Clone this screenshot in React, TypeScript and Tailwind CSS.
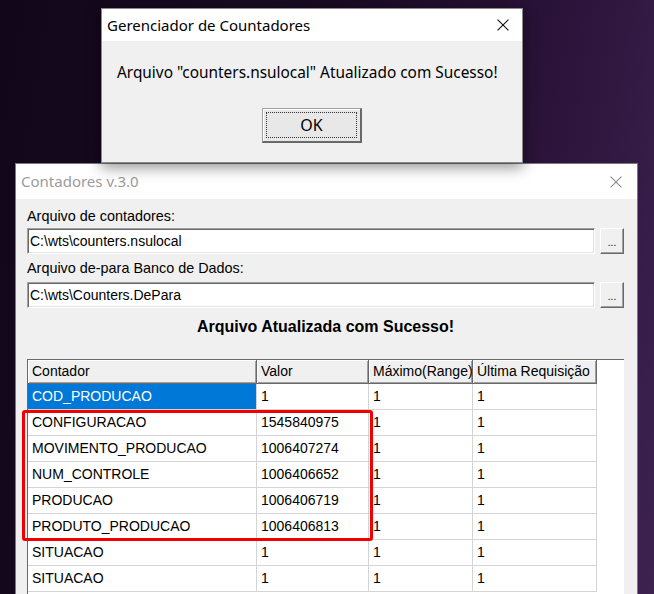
import React from "react";

const rows = [
  { name: "COD_PRODUCAO", valor: "1", max: "1", ult: "1", selected: true },
  { name: "CONFIGURACAO", valor: "1545840975", max: "1", ult: "1" },
  { name: "MOVIMENTO_PRODUCAO", valor: "1006407274", max: "1", ult: "1" },
  { name: "NUM_CONTROLE", valor: "1006406652", max: "1", ult: "1" },
  { name: "PRODUCAO", valor: "1006406719", max: "1", ult: "1" },
  { name: "PRODUTO_PRODUCAO", valor: "1006406813", max: "1", ult: "1" },
  { name: "SITUACAO", valor: "1", max: "1", ult: "1" },
  { name: "SITUACAO", valor: "1", max: "1", ult: "1" },
];

const sans = "font-['Liberation_Sans',Arial,sans-serif]";
const ui = "font-['Noto_Sans','Open_Sans',sans-serif]";

const CloseX = ({ color, size = 11 }: { color: string; size?: number }) => (
  <svg width={size} height={size} viewBox="0 0 11 11" fill="none">
    <path d="M0.5 0.5L10.5 10.5M10.5 0.5L0.5 10.5" stroke={color} strokeWidth="1" />
  </svg>
);

const PathField = ({ value }: { value: string }) => (
  <div className="flex items-center gap-[5px]">
    <div className="flex h-[26px] w-[568px] items-center border border-t-[#a0a0a0] border-l-[#a0a0a0] border-b-white border-r-white bg-white pl-[2px] shadow-[inset_1px_1px_0_#696969,inset_-1px_-1px_0_#e3e3e3]">
      <span className="text-[14px] leading-[16px] text-black">{value}</span>
    </div>
    <button className="flex h-[26px] w-[24px] items-end justify-center border border-t-white border-l-white border-b-[#696969] border-r-[#696969] bg-[#f0f0f0] pb-[5px] text-[10px] leading-[10px] text-black shadow-[inset_-1px_-1px_0_#a0a0a0]">
      ...
    </button>
  </div>
);

const headerCell =
  "flex h-full items-center overflow-hidden whitespace-nowrap border-r border-b border-[#696969] bg-[#f0f0f0] pl-[4px] shadow-[inset_1px_1px_0_#ffffff,inset_-1px_-1px_0_#a0a0a0]";
const cell = "flex h-full items-center overflow-hidden whitespace-nowrap border-r border-b border-[#d4d4d4] pl-[4px]";

const MainWindow = () => (
  <div className={`absolute left-[15px] top-[163px] flex h-[460px] w-[623px] flex-col border border-[#7a7a7a] bg-[#f0f0f0] ${sans}`}>
    <div className="flex h-[35px] shrink-0 items-center justify-between bg-white pl-[5px] pr-[15px]">
      <span className={`${ui} text-[15px] text-[#9b9b9b]`}>Contadores v.3.0</span>
      <CloseX color="#8a8a8a" size={12} />
    </div>
    <div className="flex flex-col pl-[11px] pr-[13px] pt-[9px] text-black">
      <div className="h-[16px] text-[14.4px] leading-[16px]">Arquivo de contadores:</div>
      <div className="mt-[4px]">
        <PathField value="C:\wts\counters.nsulocal" />
      </div>
      <div className="mt-[6px] h-[16px] text-[14.4px] leading-[16px]">Arquivo de-para Banco de Dados:</div>
      <div className="mt-[6px]">
        <PathField value="C:\wts\Counters.DePara" />
      </div>
      <div className="mt-[11px] h-[16px] text-center text-[16px] font-bold leading-[16px]">
        Arquivo Atualizada com Sucesso!
      </div>
      <div className="mt-[24px] h-[300px] w-[597px] border-t border-l border-[#696969] bg-white">
        <div className="flex h-[24px] text-[14px]">
          <div className={`${headerCell} w-[229px]`}>Contador</div>
          <div className={`${headerCell} w-[112px]`}>Valor</div>
          <div className={`${headerCell} w-[104px]`}>Máximo(Range)</div>
          <div className={`${headerCell} w-[124px]`}>Última Requisição</div>
        </div>
        {rows.map((r, i) => (
          <div key={i} className="flex h-[26px] text-[14px]">
            <div className={`${cell} w-[229px] ${r.selected ? "bg-[#0078d7] text-white" : ""}`}>{r.name}</div>
            <div className={`${cell} w-[112px]`}>{r.valor}</div>
            <div className={`${cell} w-[104px]`}>{r.max}</div>
            <div className={`${cell} w-[124px]`}>{r.ult}</div>
          </div>
        ))}
      </div>
    </div>
  </div>
);

const MessageDialog = () => (
  <div className={`absolute left-[101px] top-[8px] flex h-[155px] w-[422px] flex-col border border-[#8a8a8a] bg-[#f0f0f0] shadow-[0_4px_14px_rgba(0,0,0,0.45)] ${ui}`}>
    <div className="flex h-[32px] shrink-0 items-center justify-between bg-white pl-[5px] pr-[13px]">
      <span className="text-[15px] text-black">Gerenciador de Countadores</span>
      <CloseX color="#111111" size={12} />
    </div>
    <div className="mt-[23px] h-[18px] whitespace-nowrap pl-[15px] text-[15.4px] leading-[18px] text-black">
      Arquivo "counters.nsulocal" Atualizado com Sucesso!
    </div>
    <div className="ml-[160px] mt-[26px] flex h-[35px] w-[100px] border-t border-l border-t-[#a0a0a0] border-l-[#a0a0a0] border-r-2 border-b-2 border-r-[#696969] border-b-[#696969] bg-[#e8e8e8] p-[3px] shadow-[inset_1px_1px_0_#ffffff]">
      <div className="flex flex-1 items-center justify-center border border-dotted border-[#333333] text-[16px] text-black">
        OK
      </div>
    </div>
  </div>
);

export default function App() {
  return (
    <div className="relative h-[594px] w-[654px] overflow-hidden bg-[linear-gradient(100deg,#12071a_0%,#190b23_45%,#2b133a_75%,#3d2250_100%)]">
      <MainWindow />
      <div className="absolute left-[22px] top-[410px] h-[131px] w-[351px] rounded-[3px] border-[3px] border-[#f00000]" />
      <MessageDialog />
    </div>
  );
}
